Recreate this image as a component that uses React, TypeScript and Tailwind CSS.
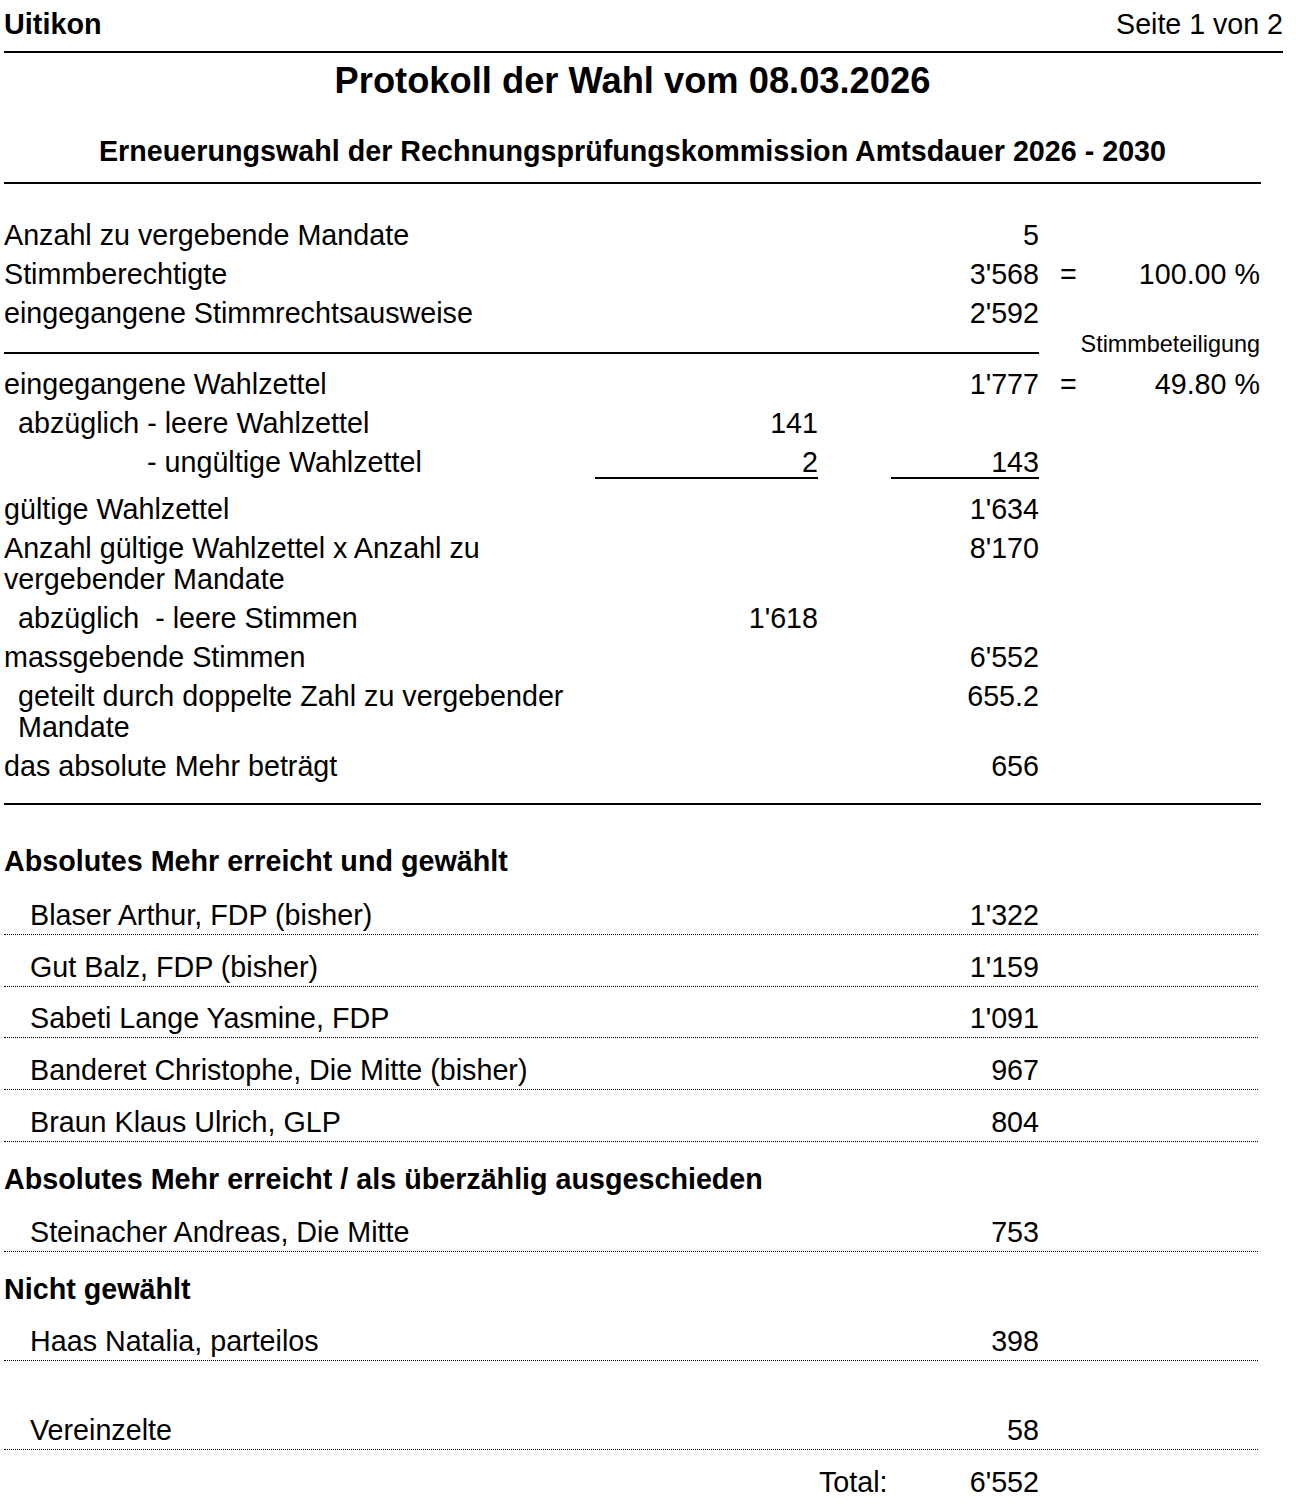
import React from "react";

type StatProps = {
  label: React.ReactNode;
  indent?: string;
  mid?: string;
  val?: string;
  eq?: boolean;
  pct?: string;
};

function StatRow({ label, indent = "", mid, val, eq, pct }: StatProps) {
  return (
    <div className="flex items-start py-[4px] leading-[31px]">
      <div className={`w-[591px] ${indent}`}>{label}</div>
      <div className="w-[223px] text-right">{mid}</div>
      <div className="w-[73px]" />
      <div className="w-[148px] text-right">{val}</div>
      <div className="w-[50px] pl-[21px]">{eq ? "=" : ""}</div>
      <div className="w-[171px] text-right">{pct}</div>
    </div>
  );
}

function Candidate({ name, votes }: { name: string; votes: string }) {
  return (
    <div className="flex w-[1254px] pt-[16.75px] pb-[3px] leading-[31px] border-b border-dotted border-black">
      <div className="w-[887px] pl-[26px]">{name}</div>
      <div className="w-[148px] text-right">{votes}</div>
      <div className="flex-1" />
    </div>
  );
}

export default function App() {
  return (
    <div className="min-h-[1505px] bg-white pl-[4px] text-black font-['Liberation_Sans',Arial,sans-serif] text-[28.7px]">
      {/* Header */}
      <div className="flex w-[1279px] justify-between border-b-2 border-black pt-[6px] pb-[9px] leading-[36px]">
        <span className="text-[28.8px] font-bold">Uitikon</span>
        <span className="text-[28.6px]">Seite 1 von 2</span>
      </div>

      {/* Title */}
      <div className="mt-[6px] w-[1257px] text-center text-[36.3px] font-bold leading-[44px]">
        Protokoll der Wahl vom 08.03.2026
      </div>
      <div className="mt-[28px] w-[1257px] border-b-2 border-black pb-[11px] text-center font-bold leading-[40px]">
        Erneuerungswahl der Rechnungsprüfungskommission Amtsdauer 2026 - 2030
      </div>

      {/* Stats */}
      <div className="mt-[32px]">
        <StatRow label="Anzahl zu vergebende Mandate" val="5" />
        <StatRow label="Stimmberechtigte" val="3'568" eq pct="100.00 %" />
        <StatRow label="eingegangene Stimmrechtsausweise" val="2'592" />

        <div className="flex h-[32px] items-start">
          <div className="h-[21px] w-[1035px] border-b-2 border-black" />
          <div className="w-[221px] text-right text-[23.4px] leading-[23px]">Stimmbeteiligung</div>
        </div>

        <StatRow label="eingegangene Wahlzettel" val="1'777" eq pct="49.80 %" />
        <StatRow label="abzüglich - leere Wahlzettel" indent="pl-[14px]" mid="141" />
        <div className="flex h-[47px] items-start leading-[31px]">
          <div className="w-[591px] pt-[4px] pl-[143px]">- ungültige Wahlzettel</div>
          <div className="h-[36px] w-[223px] border-b-2 border-black pt-[4px] text-right">2</div>
          <div className="w-[73px]" />
          <div className="h-[36px] w-[148px] border-b-2 border-black pt-[4px] text-right">143</div>
        </div>

        <StatRow label="gültige Wahlzettel" val="1'634" />
        <StatRow label="Anzahl gültige Wahlzettel x Anzahl zu vergebender Mandate" val="8'170" />
        <StatRow label={<>abzüglich&nbsp; - leere Stimmen</>} indent="pl-[14px]" mid="1'618" />
        <StatRow label="massgebende Stimmen" val="6'552" />
        <StatRow label="geteilt durch doppelte Zahl zu vergebender Mandate" indent="pl-[14px]" val="655.2" />
        <StatRow label="das absolute Mehr beträgt" val="656" />
      </div>

      <div className="mt-[17px] w-[1257px] border-t-2 border-black" />

      {/* Results */}
      <div className="mt-[41px] pb-[6px] font-bold leading-[31px]">Absolutes Mehr erreicht und gewählt</div>
      <Candidate name="Blaser Arthur, FDP (bisher)" votes="1'322" />
      <Candidate name="Gut Balz, FDP (bisher)" votes="1'159" />
      <Candidate name="Sabeti Lange Yasmine, FDP" votes="1'091" />
      <Candidate name="Banderet Christophe, Die Mitte (bisher)" votes="967" />
      <Candidate name="Braun Klaus Ulrich, GLP" votes="804" />

      <div className="mt-[22px] pb-[5px] font-bold leading-[31px]">
        Absolutes Mehr erreicht / als überzählig ausgeschieden
      </div>
      <Candidate name="Steinacher Andreas, Die Mitte" votes="753" />

      <div className="mt-[22px] pb-[5px] font-bold leading-[31px]">Nicht gewählt</div>
      <Candidate name="Haas Natalia, parteilos" votes="398" />

      <div className="mt-[37px]">
        <Candidate name="Vereinzelte" votes="58" />
      </div>

      <div className="mt-[16.5px] flex leading-[31px]">
        <div className="w-[815px]" />
        <div className="w-[72px]">Total:</div>
        <div className="w-[148px] text-right">6'552</div>
      </div>
    </div>
  );
}
